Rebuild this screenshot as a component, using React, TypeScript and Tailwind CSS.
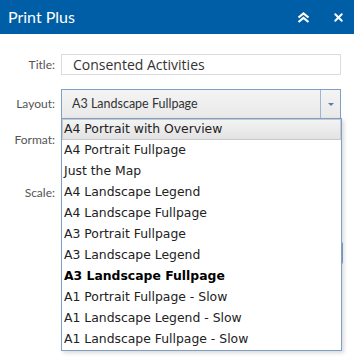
import { X } from "lucide-react";

const layouts = [
  "A4 Portrait with Overview",
  "A4 Portrait Fullpage",
  "Just the Map",
  "A4 Landscape Legend",
  "A4 Landscape Fullpage",
  "A3 Portrait Fullpage",
  "A3 Landscape Legend",
  "A3 Landscape Fullpage",
  "A1 Portrait Fullpage - Slow",
  "A1 Landscape Legend - Slow",
  "A1 Landscape Fullpage - Slow",
];

const selected = "A3 Landscape Fullpage";
const hovered = "A4 Portrait with Overview";

export default function App() {
  return (
    <div className="w-[354px] h-[362px] bg-white relative overflow-hidden font-['Lato',sans-serif]">
      {/* Header */}
      <div className="h-[34px] bg-[#005ea6] flex items-center justify-between pl-2 pr-[9px]">
        <span className="text-white text-[16px] leading-none">Print Plus</span>
        <div className="flex items-center gap-[22px] text-white">
          <svg width="13" height="11" viewBox="0 0 13 11" fill="none" stroke="currentColor" strokeWidth="2.2">
            <path d="M1.5 5.5 L6.5 1.5 L11.5 5.5" />
            <path d="M1.5 10 L6.5 6 L11.5 10" />
          </svg>
          <X size={13} strokeWidth={3.5} />
        </div>
      </div>

      {/* Form */}
      <div className="relative pt-5 pr-[13px] flex flex-col">
        <div className="flex items-center">
          <label className="w-[55px] mr-[6px] text-right text-[12px] text-[#555]">Title:</label>
          <div className="flex-1 h-[21px] border border-[#dcdcdc] flex items-center px-[11px] font-['Open_Sans',sans-serif] text-[14px] text-[#333]">
            Consented Activities
          </div>
        </div>

        <div className="flex items-center mt-[14px]">
          <label className="w-[55px] mr-[6px] text-right text-[12px] text-[#555]">Layout:</label>
          <div className="flex-1 h-[30px] border border-[#7d9fc8] flex bg-gradient-to-b from-[#f4f4f4] to-[#e9e9e9]">
            <div className="flex-1 flex items-center px-[10px] text-[12.5px] text-[#333]">{selected}</div>
            <div className="w-[20px] border-l border-[#9db5d4] flex items-center justify-center">
              <div className="w-0 h-0 border-l-[3px] border-r-[3px] border-t-[3px] border-l-transparent border-r-transparent border-t-[#5a7ea8]" />
            </div>
          </div>
        </div>

        <div className="flex items-center mt-[10px]">
          <label className="w-[55px] mr-[6px] text-right text-[12px] text-[#555]">Format:</label>
          <div className="flex-1 h-[21px] border border-[#dcdcdc]" />
        </div>

        <div className="flex items-center mt-[32px]">
          <label className="w-[55px] mr-[6px] text-right text-[12px] text-[#555]">Scale:</label>
          <div className="flex-1 h-[21px] border border-[#dcdcdc]" />
        </div>

        <div className="flex justify-end mt-[38px] -mr-[2px]">
          <div className="w-[80px] h-[24px] rounded-[3px] border border-[#8aa6cb] bg-[#eef2f7]" />
        </div>

        {/* Open layout dropdown */}
        <div className="absolute top-[84px] left-[61px] w-[281px] border border-[#7d9fc8] bg-white shadow-[2px_2px_4px_rgba(0,0,0,0.15)] font-['DejaVu_Sans',sans-serif] text-[12.4px] text-[#222]">
          {layouts.map((name) => (
            <div
              key={name}
              className={
                name === hovered
                  ? "h-[21px] flex items-center px-[1px] border border-[#c9c9c9] bg-gradient-to-b from-[#f3f3f3] to-[#e3e3e3]"
                  : name === selected
                  ? "h-[21px] flex items-center px-[2px] font-bold text-black"
                  : "h-[21px] flex items-center px-[2px]"
              }
            >
              {name}
            </div>
          ))}
        </div>
      </div>
    </div>
  );
}
